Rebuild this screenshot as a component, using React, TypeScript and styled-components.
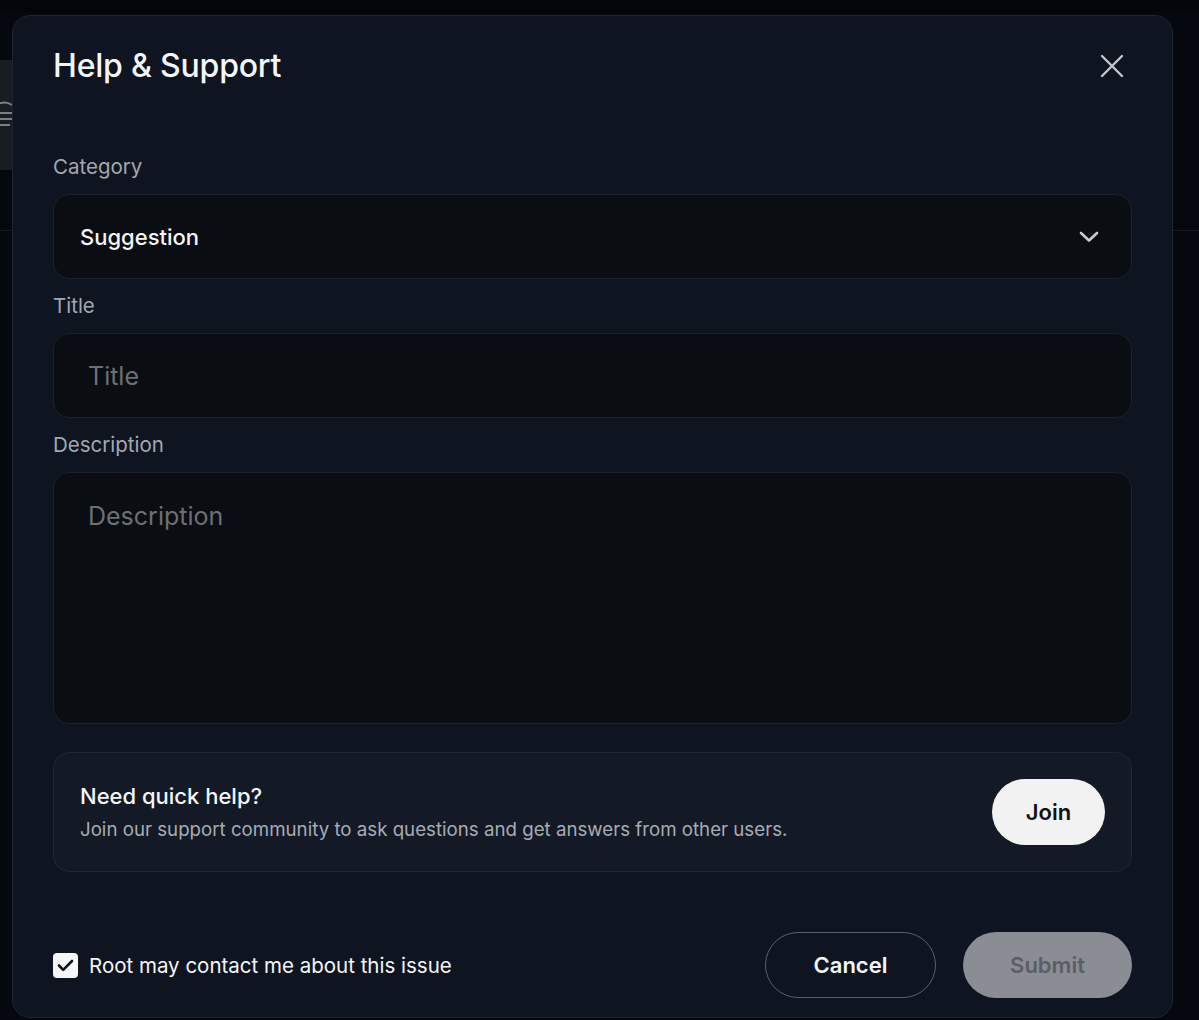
import React from 'react';
import styled, { createGlobalStyle } from 'styled-components';

const GlobalStyle = createGlobalStyle`
  html, body {
    margin: 0;
    padding: 0;
    background: #05080e;
    font-family: Inter, "Noto Sans", sans-serif;
    -webkit-font-smoothing: antialiased;
  }
  * { box-sizing: border-box; }
`;

/* background app (dimmed, behind the dialog) */
const Backdrop = styled.div`
  position: relative;
  width: 1199px;
  height: 1020px;
  overflow: hidden;
  background: #05080e;
`;

const AppTopBar = styled.div`
  height: 12px;
  background: #03050a;
`;

const AppBody = styled.div`
  display: flex;
  flex-direction: column;
`;

const SideItem = styled.div`
  margin-top: 48px;
  width: 40px;
  height: 110px;
  background: #191c21;
  display: flex;
  align-items: center;
  color: #7b7f86;
`;

const AppDivider = styled.div`
  margin-top: 60px;
  height: 1px;
  background: #161b23;
`;

/* dialog */
const Dialog = styled.div`
  position: absolute;
  top: 15px;
  left: 12px;
  width: 1161px;
  height: 1003px;
  background: #0e1520;
  border: 1px solid #1d2530;
  border-radius: 18px;
  padding: 26px 40px 0 40px;
  display: flex;
  flex-direction: column;
`;

const Header = styled.div`
  display: flex;
  align-items: center;
  justify-content: space-between;
  height: 47px;
`;

const Heading = styled.h1`
  margin: 0;
  font-size: 32px;
  font-weight: 500;
  color: #f4f5f7;
  letter-spacing: -0.2px;
`;

const CloseButton = styled.button`
  background: none;
  border: none;
  padding: 0;
  margin-right: 8px;
  color: #c3c7cd;
  display: flex;
  cursor: pointer;
`;

const Form = styled.div`
  margin-top: 64px;
  display: flex;
  flex-direction: column;
`;

const Label = styled.div`
  font-size: 20.5px;
  font-weight: 400;
  color: #a3a8b0;
  line-height: 28px;
  margin-bottom: 13px;
`;

const Field = styled.div<{ $tall?: boolean }>`
  height: ${p => (p.$tall ? '252px' : '85px')};
  background: #0a0d12;
  border: 1px solid #1b222c;
  border-radius: 16px;
  display: flex;
  align-items: ${p => (p.$tall ? 'flex-start' : 'center')};
  justify-content: space-between;
  padding: ${p => (p.$tall ? '28px 34px' : '0 34px')};
  margin-bottom: 13px;
`;

const SelectField = styled(Field)`
  padding: 0 32px 0 26px;
`;

const SelectValue = styled.span`
  font-size: 22px;
  font-weight: 500;
  color: #f4f5f7;
`;

const Placeholder = styled.span`
  font-size: 25px;
  font-weight: 400;
  color: #6c7076;
`;

const HelpCard = styled.div`
  margin-top: 15px;
  height: 120px;
  background: #131a25;
  border: 1px solid #1f2733;
  border-radius: 16px;
  padding: 0 26px 0 26px;
  display: flex;
  align-items: center;
  justify-content: space-between;
`;

const HelpText = styled.div`
  display: flex;
  flex-direction: column;
  gap: 9px;
`;

const HelpTitle = styled.div`
  font-size: 22px;
  font-weight: 500;
  color: #f4f5f7;
`;

const HelpSub = styled.div`
  font-size: 18.7px;
  color: #a7acb4;
`;

const PillButton = styled.button<{ $variant: 'light' | 'outline' | 'disabled' }>`
  height: 66px;
  border-radius: 33px;
  font-family: inherit;
  font-size: 22px;
  font-weight: 600;
  padding: 0;
  cursor: pointer;
  ${p =>
    p.$variant === 'light'
      ? `width: 113px; background: #f2f2f2; color: #111; border: none;`
      : p.$variant === 'outline'
      ? `width: 171px; background: transparent; color: #f4f5f7; border: 1px solid #5b6068;`
      : `width: 169px; background: #8a8d93; color: #5b5e64; border: none;`}
`;

const Footer = styled.div`
  margin-top: 60px;
  display: flex;
  align-items: center;
  justify-content: space-between;
`;

const CheckRow = styled.label`
  display: flex;
  align-items: center;
  gap: 11px;
  font-size: 20.5px;
  color: #f4f5f7;
`;

const CheckBox = styled.span`
  width: 25px;
  height: 25px;
  border-radius: 4px;
  background: #f6f6f6;
  display: flex;
  align-items: center;
  justify-content: center;
  color: #0e1520;
`;

const Actions = styled.div`
  display: flex;
  gap: 27px;
`;

const CloseIcon = () => (
  <svg width="24" height="24" viewBox="0 0 24 24" fill="none" stroke="currentColor" strokeWidth="2.4" strokeLinecap="round">
    <path d="M2 2L22 22M22 2L2 22" />
  </svg>
);

const Chevron = () => (
  <svg width="20" height="12" viewBox="0 0 20 12" fill="none" stroke="#c9ccd1" strokeWidth="2.6" strokeLinecap="round" strokeLinejoin="round">
    <path d="M2 2L10 9.5L18 2" />
  </svg>
);

const Check = () => (
  <svg width="17" height="13" viewBox="0 0 17 13" fill="none" stroke="currentColor" strokeWidth="2.6" strokeLinecap="round" strokeLinejoin="round">
    <path d="M2 6.5L6.2 10.8L15 2" />
  </svg>
);

const MenuGlyph = () => (
  <svg width="14" height="40" viewBox="0 0 14 40" fill="none" stroke="currentColor" strokeWidth="2">
    <path d="M-6 12A14 14 0 0 1 12 10" />
    <path d="M-6 18H12M-6 24H12M-6 30H10" />
  </svg>
);

export default function App() {
  return (
    <>
      <GlobalStyle />
      <Backdrop>
        <AppTopBar />
        <AppBody>
          <SideItem>
            <MenuGlyph />
          </SideItem>
          <AppDivider />
        </AppBody>

        <Dialog>
          <Header>
            <Heading>Help &amp; Support</Heading>
            <CloseButton aria-label="Close">
              <CloseIcon />
            </CloseButton>
          </Header>

          <Form>
            <Label>Category</Label>
            <SelectField>
              <SelectValue>Suggestion</SelectValue>
              <Chevron />
            </SelectField>

            <Label>Title</Label>
            <Field>
              <Placeholder>Title</Placeholder>
            </Field>

            <Label>Description</Label>
            <Field $tall>
              <Placeholder>Description</Placeholder>
            </Field>

            <HelpCard>
              <HelpText>
                <HelpTitle>Need quick help?</HelpTitle>
                <HelpSub>Join our support community to ask questions and get answers from other users.</HelpSub>
              </HelpText>
              <PillButton $variant="light">Join</PillButton>
            </HelpCard>
          </Form>

          <Footer>
            <CheckRow>
              <CheckBox>
                <Check />
              </CheckBox>
              Root may contact me about this issue
            </CheckRow>
            <Actions>
              <PillButton $variant="outline">Cancel</PillButton>
              <PillButton $variant="disabled">Submit</PillButton>
            </Actions>
          </Footer>
        </Dialog>
      </Backdrop>
    </>
  );
}
